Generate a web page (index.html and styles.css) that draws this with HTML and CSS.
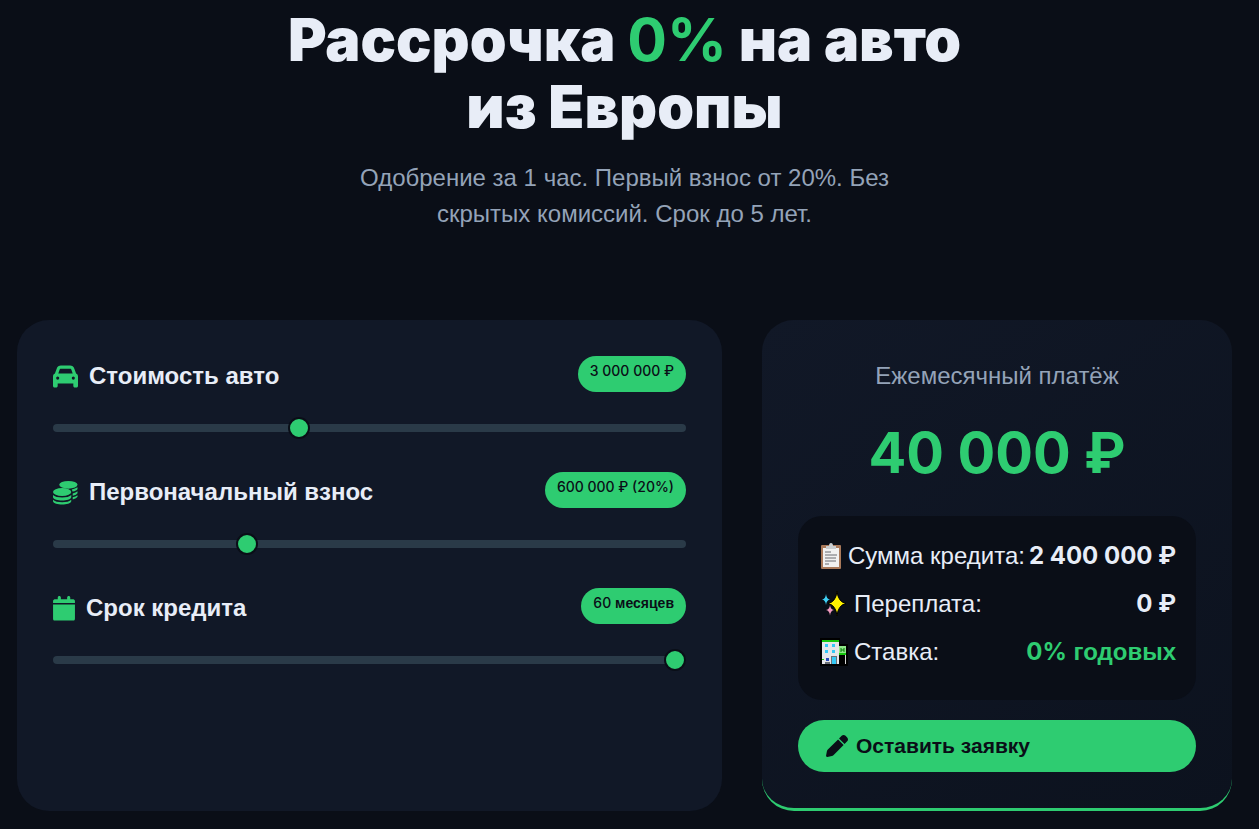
FILE: index.html
```html
<!DOCTYPE html>
<html lang="ru">
<head>
  <meta charset="UTF-8">
  <meta name="viewport" content="width=device-width, initial-scale=1.0">
  <title>Рассрочка 0% на авто из Европы</title>
  <link rel="stylesheet" href="styles.css">
</head>
<body>
  <div class="container">
    <header class="hero">
      <h1>Рассрочка <span class="accent">0%</span> на авто<br>из Европы</h1>
      <p>Одобрение за 1 час. Первый взнос от 20%. Без скрытых комиссий. Срок до 5 лет.</p>
    </header>

    <main class="calculator">
      <section class="card">
        <div class="slider-group">
          <div class="slider-head">
            <label for="price">
              <svg width="25" height="25" viewBox="0 0 512 512" fill="currentColor"><path d="M135 117 109 192H403L377 117C374 107 367 96 350 96H162C145 96 138 107 135 117ZM39 197 75 96C88 58 122 32 162 32H350C390 32 424 58 437 96L473 197C496 206 512 229 512 256V448C512 466 498 480 480 480H448C430 480 416 466 416 448V400H96V448C96 466 82 480 64 480H32C14 480 0 466 0 448V256C0 229 16 206 39 197ZM128 288A32 32 0 1 0 64 288 32 32 0 1 0 128 288ZM416 320A32 32 0 1 0 416 256 32 32 0 1 0 416 320Z"/></svg>
              Стоимость авто
            </label>
            <output class="badge num" for="price">3 000 000 ₽</output>
          </div>
          <input type="range" id="price" min="500000" max="7000000" step="50000" value="3000000">
        </div>

        <div class="slider-group">
          <div class="slider-head">
            <label for="down">
              <svg width="25" height="25" viewBox="0 0 26 26" fill="currentColor">
                <ellipse cx="16" cy="5" rx="9.500" ry="4"/>
                <ellipse cx="9.500" cy="12.500" rx="9.500" ry="4.200"/>
                <path d="M0 15.500c3 3.500 16 3.500 19 0v2.500c-1 4.500-18 4.500-19 0zM0 20.500c3 3.500 16 3.500 19 0v1.500c-1 4.500-18 4.500-19 0zM19.500 9.800q3.500-.8 6-2.300v1.800q-.8 2-5.200 2.700zM20.500 14q3-.8 5-2.200v1.900q-.8 1.800-5 2.800zM20.500 18q3-.8 5-2.200v1.600q-.8 1.800-5 2.800z"/>
              </svg>
              Первоначальный взнос
            </label>
            <output class="badge num" for="down">600 000 ₽ (20%)</output>
          </div>
          <input type="range" id="down" min="0" max="2000000" step="10000" value="600000">
        </div>

        <div class="slider-group">
          <div class="slider-head">
            <label for="term">
              <svg width="22" height="25" viewBox="0 0 448 512" fill="currentColor"><path d="M96 32V64H48C22 64 0 76 0 102V144H448V102C448 76 426 64 400 64H352V32C352 14 338 0 320 0S288 14 288 32V64H160V32C160 14 146 0 128 0S96 14 96 32ZM448 176H0V464C0 490 12 502 38 502H410C436 502 448 490 448 464Z"/></svg>
              Срок кредита
            </label>
            <output class="badge" for="term"><span class="num">60</span> месяцев</output>
          </div>
          <input type="range" id="term" min="6" max="60" step="1" value="60">
        </div>
      </section>

      <section class="card result">
        <div class="result-label">Ежемесячный платёж</div>
        <div class="result-amount num">40 000 ₽</div>

        <div class="details">
          <div class="details-row">
            <span class="details-name">
              <svg width="22" height="27" viewBox="0 0 22 27">
                <rect x="1" y="2" width="20" height="24" rx="1" fill="#a9795a"/>
                <path d="M3 5h16v19H3z" fill="#f1f1f1"/>
                <path d="M6 3h3q0-3 2-3t2 3h3v3H6z" fill="#c9cdd0"/>
                <path d="M5 9h6M5 12h12M5 15h11M5 18h11M5 21h4" stroke="#686b70" stroke-width="1"/>
              </svg>
              Сумма кредита:
            </span>
            <strong class="num">2 400 000 ₽</strong>
          </div>
          <div class="details-row">
            <span class="details-name">
              <svg width="28" height="28" viewBox="0 0 28 28">
                <path d="M17 1q1 11 9 12.500Q18 15 17 26q-1-11-9-12.500Q16 12 17 1z" fill="#fff100" stroke="#000"/>
                <path d="M6 4q.5 5 4 5.500Q6.500 10 6 15q-.5-5-4-5.500Q5.500 9 6 4z" fill="#3fd0f5"/>
                <path d="M10 15q.5 4.500 4 5-3.500.5-4 5.500-.5-5-4-5.500 3.500-.5 4-5z" fill="#f29ac0"/>
              </svg>
              Переплата:
            </span>
            <strong class="num">0 ₽</strong>
          </div>
          <div class="details-row">
            <span class="details-name">
              <svg width="28" height="28" viewBox="0 0 28 28">
                <path d="M0 0h20v6h8v22H0z" fill="#000"/>
                <path d="M2 2h17v24H2z" fill="#e5e6e8"/>
                <path d="M2 2h17v2H2zM19 15h7v2h-7zM2 21h2v1H2z" fill="#16c60c"/>
                <path d="M19 8h7v7h-7z" fill="#8fe88a"/>
                <path d="M21 10v4M24 10v4M21 12h3" stroke="#087a08"/>
                <path d="M5 6h3v3H5zM12 6h3v3h-3zM5 12h3v3H5zM12 12h3v3h-3zM12 19h4v7h-4z" fill="#35c8f5"/>
                <path d="M11 18h6v8h-1v-7h-4v7h-1zM5 24h5v2H5z" fill="#6b7078"/>
                <path d="M6 20h3v3H6z" fill="#2749b8"/>
                <path d="M25 17h1v9h-1z" fill="#d5d5d5"/>
              </svg>
              Ставка:
            </span>
            <strong class="accent"><span class="num">0%</span> годовых</strong>
          </div>
        </div>

        <button type="button" class="btn">
          <svg width="22" height="22" viewBox="0 0 512 512" fill="currentColor"><path d="M410 231 281 102 43 340C33 350 26 362 22 375L1 481C-2 499 13 514 31 511L137 490C150 486 162 479 172 469ZM303 80 432 209 493 148C518 123 518 82 493 57L455 19C430-6 389-6 364 19Z"/></svg>
          Оставить заявку
        </button>
      </section>
    </main>
  </div>
</body>
</html>
```
FILE: styles.css
```css
* {
  margin: 0;
  padding: 0;
  box-sizing: border-box;
}

body {
  font-family: "Liberation Sans", Arial, sans-serif;
  font-size: 24px;
  line-height: 36px;
  background-color: #0a0e17;
  color: #e8edf7;
}

.container {
  max-width: 1400px;
  margin: 0 auto;
  padding: 6px 27px 18px 17px;
}

.num {
  font-family: Inter, sans-serif;
  line-height: 1;
}

.accent {
  color: #2ecc71;
}

/* hero */
.hero {
  text-align: center;
  margin-bottom: 88px;
}

.hero h1 {
  font-family: Inter, sans-serif;
  font-size: 59px;
  font-weight: 900;
  line-height: 67px;
  margin-bottom: 20px;
}

.hero h1 .accent {
  font-weight: 700;
}

.hero p {
  max-width: 560px;
  margin: 0 auto;
  color: #94a3b8;
}

/* calculator */
.calculator {
  display: grid;
  grid-template-columns: 3fr 2fr;
  gap: 40px;
}

.card {
  background-color: #111827;
  border-radius: 32px;
  padding: 36px;
}

.slider-group {
  margin-bottom: 40px;
}

.slider-head {
  display: flex;
  justify-content: space-between;
  align-items: center;
  margin-bottom: 32px;
}

.slider-head label {
  display: flex;
  align-items: center;
  gap: 11px;
  padding-top: 4px;
  font-weight: 700;
  line-height: 32px;
}

.slider-head svg {
  color: #2ecc71;
}

.badge {
  background-color: #2ecc71;
  color: #0a0e17;
  font-size: 14px;
  font-weight: 700;
  line-height: 20px;
  padding: 5px 12px 11px;
  border-radius: 18px;
}

.badge.num,
.badge .num {
  font-weight: 500;
}

input[type="range"] {
  -webkit-appearance: none;
  appearance: none;
  display: block;
  width: 100%;
  height: 8px;
  background: #2a3a48;
  border-radius: 4px;
  cursor: pointer;
}

input[type="range"]::-webkit-slider-thumb {
  -webkit-appearance: none;
  width: 22px;
  height: 22px;
  background: #2ecc71;
  border: 2px solid #0a0e17;
  border-radius: 50%;
}

/* result */
.result {
  background: linear-gradient(145deg, #111827, #0c121e);
  border-bottom: 3px solid #2ecc71;
}

.result-label {
  padding-top: 4px;
  text-align: center;
  color: #94a3b8;
  line-height: 32px;
}

.result-amount {
  margin: 19px 0 21px;
  text-align: center;
  color: #2ecc71;
  font-size: 56px;
  font-weight: 700;
  line-height: 84px;
}

.details {
  background-color: #0a0e17;
  border-radius: 24px;
  padding: 22px 20px 18px 22px;
  margin-bottom: 20px;
}

.details-row {
  display: flex;
  justify-content: space-between;
  align-items: center;
  height: 36px;
  margin-bottom: 12px;
  white-space: nowrap;
}

.details-name {
  display: flex;
  align-items: center;
  gap: 6px;
}

.btn {
  display: flex;
  align-items: center;
  gap: 8px;
  width: 100%;
  padding: 10px 28px;
  border: none;
  border-radius: 26px;
  background-color: #2ecc71;
  color: #0a0e17;
  font-family: inherit;
  font-size: 21px;
  font-weight: 700;
  line-height: 32px;
  cursor: pointer;
}
```
